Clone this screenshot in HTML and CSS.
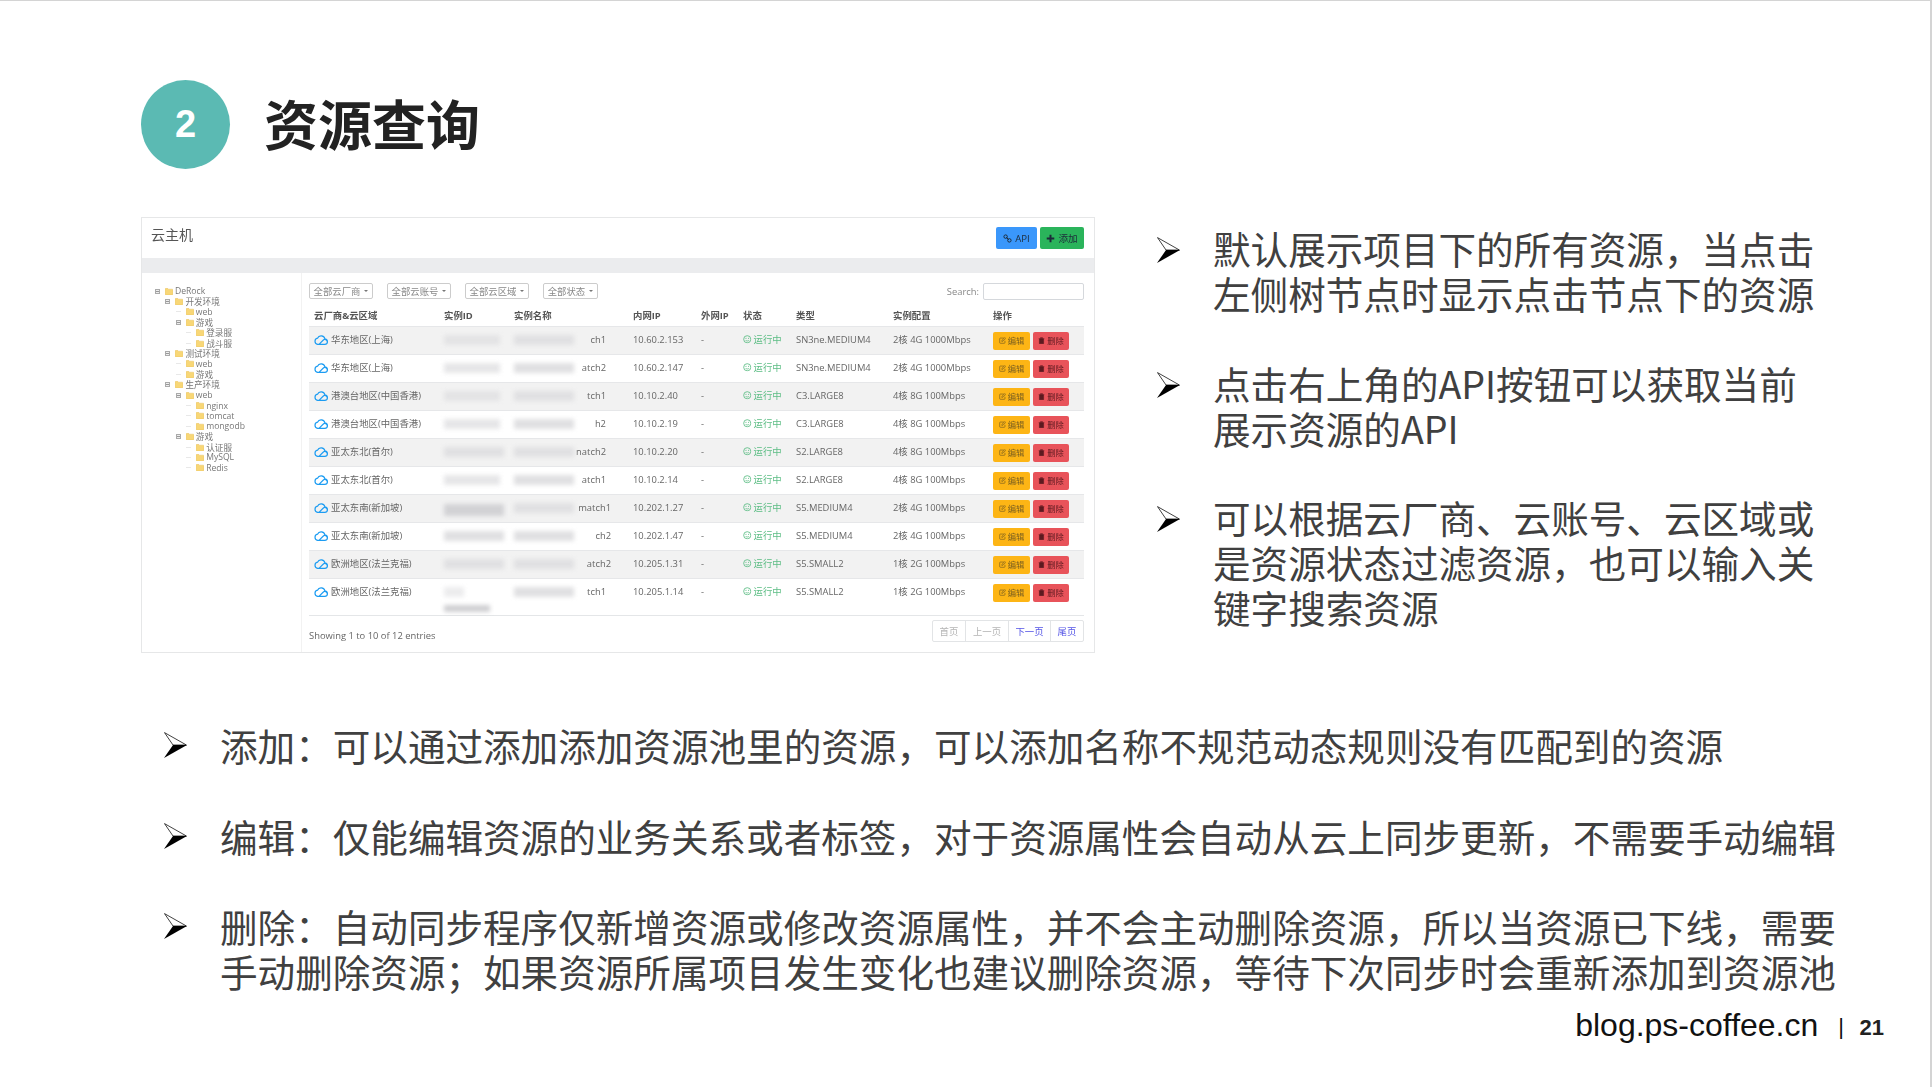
FILE: index.html
```html
<!DOCTYPE html>
<html lang="zh-CN">
<head>
<meta charset="utf-8">
<title>资源查询</title>
<link rel="stylesheet" href="styles.css">
</head>
<body>
<svg class="defs" aria-hidden="true">
  <symbol id="arrow" viewBox="0 0 23 26">
    <path d="M.5.6 22.4 13 9 13Z" fill="#fff" stroke="#111" stroke-width=".8"/>
    <path d="M0 26 9 13H23Z" fill="#000"/>
  </symbol>
  <symbol id="cloud" viewBox="0 0 14 11">
    <path d="M3.6 10.3H10.6A2.7 2.7 0 0 0 10.9 4.9 3.9 3.9 0 0 0 3.5 4.2 3.1 3.1 0 0 0 3.6 10.3ZM5.2 10.2 9.6 5.8A2.2 2.2 0 0 1 13 7.6" fill="none" stroke="#1c9cf2" stroke-width="1.2"/>
  </symbol>
  <symbol id="folder" viewBox="0 0 9 8">
    <path d="M0 1.2C0 .6.3.4.8.4H3L3.8 1.3H8.2C8.7 1.3 9 1.6 9 2V7.2C9 7.7 8.7 8 8.2 8H.8C.3 8 0 7.7 0 7.2Z" fill="#f8d777" stroke="#e3b84e" stroke-width=".4"/>
  </symbol>
  <symbol id="smile" viewBox="0 0 10 10">
    <circle cx="5" cy="5" r="4.2" fill="none" stroke="currentColor" stroke-width="1"/>
    <path d="M3 6C3.6 7.4 6.4 7.4 7 6" fill="none" stroke="currentColor" stroke-width=".9"/>
    <circle cx="3.5" cy="3.8" r=".7" fill="currentColor"/><circle cx="6.5" cy="3.8" r=".7" fill="currentColor"/>
  </symbol>
  <symbol id="edit" viewBox="0 0 10 10">
    <path d="M7 1.500H2C1.300 1.500 1 1.900 1 2.500V8C1 8.600 1.300 9 2 9H7.500C8.100 9 8.500 8.600 8.500 8V5.500M4 6.300 4.400 4.600 8.200.8 9.500 2.100 5.700 5.900Z" fill="none" stroke="currentColor" stroke-width="1"/>
  </symbol>
  <symbol id="trash" viewBox="0 0 10 10">
    <path d="M1 2.200H9M3.500 2V1H6.500V2M2 3H8V9.500H2Z" fill="currentColor" stroke="currentColor" stroke-width=".8"/>
  </symbol>
  <symbol id="link" viewBox="0 0 12 12">
    <circle cx="3.500" cy="3.500" r="2.300" fill="none" stroke="currentColor" stroke-width="1.300"/>
    <circle cx="8.500" cy="8.500" r="2.300" fill="none" stroke="currentColor" stroke-width="1.300"/>
    <path d="M4.500 4.500 7.500 7.500" stroke="currentColor" stroke-width="1.300"/>
  </symbol>
  <symbol id="plus" viewBox="0 0 10 10">
    <path d="M5 .8V9.200M.8 5H9.200" stroke="currentColor" stroke-width="2.200"/>
  </symbol>
</svg>

<main class="slide">
  <header class="heading">
    <div class="badge">2</div>
    <h1 class="title">资源查询</h1>
  </header>

  <section class="content">
    <div class="panel">
      <div class="panel-head">
        <span class="panel-title">云主机</span>
        <div class="head-actions">
          <span class="btn btn-api"><svg class="ico"><use href="#link"/></svg>API</span>
          <span class="btn btn-add"><svg class="ico"><use href="#plus"/></svg>添加</span>
        </div>
      </div>
      <div class="panel-band"></div>
      <div class="panel-body">
        <ul class="tree">
          <li class="node l0"><i class="sw minus"></i><svg class="fd"><use href="#folder"/></svg>DeRock</li>
          <li class="node l1"><i class="sw minus"></i><svg class="fd"><use href="#folder"/></svg>开发环境</li>
          <li class="node l2"><i class="sw"></i><svg class="fd"><use href="#folder"/></svg>web</li>
          <li class="node l2"><i class="sw minus"></i><svg class="fd"><use href="#folder"/></svg>游戏</li>
          <li class="node l3"><i class="sw"></i><svg class="fd"><use href="#folder"/></svg>登录服</li>
          <li class="node l3"><i class="sw"></i><svg class="fd"><use href="#folder"/></svg>战斗服</li>
          <li class="node l1"><i class="sw minus"></i><svg class="fd"><use href="#folder"/></svg>测试环境</li>
          <li class="node l2"><i class="sw"></i><svg class="fd"><use href="#folder"/></svg>web</li>
          <li class="node l2"><i class="sw"></i><svg class="fd"><use href="#folder"/></svg>游戏</li>
          <li class="node l1"><i class="sw minus"></i><svg class="fd"><use href="#folder"/></svg>生产环境</li>
          <li class="node l2"><i class="sw minus"></i><svg class="fd"><use href="#folder"/></svg>web</li>
          <li class="node l3"><i class="sw"></i><svg class="fd"><use href="#folder"/></svg>nginx</li>
          <li class="node l3"><i class="sw"></i><svg class="fd"><use href="#folder"/></svg>tomcat</li>
          <li class="node l3"><i class="sw"></i><svg class="fd"><use href="#folder"/></svg>mongodb</li>
          <li class="node l2"><i class="sw minus"></i><svg class="fd"><use href="#folder"/></svg>游戏</li>
          <li class="node l3"><i class="sw"></i><svg class="fd"><use href="#folder"/></svg>认证服</li>
          <li class="node l3"><i class="sw"></i><svg class="fd"><use href="#folder"/></svg>MySQL</li>
          <li class="node l3"><i class="sw"></i><svg class="fd"><use href="#folder"/></svg>Redis</li>
        </ul>
        <div class="data">
          <div class="filters">
            <div class="selects">
              <span class="select">全部云厂商<i class="caret"></i></span>
              <span class="select">全部云账号<i class="caret"></i></span>
              <span class="select">全部云区域<i class="caret"></i></span>
              <span class="select sel-short">全部状态<i class="caret"></i></span>
            </div>
            <label class="search">Search:<span class="search-box"></span></label>
          </div>
          <table class="grid">
            <colgroup><col class="c1"><col class="c2"><col class="c3"><col class="c4"><col class="c5"><col class="c6"><col class="c7"><col class="c8"><col class="c9"></colgroup>
            <thead><tr><th>云厂商&amp;云区域</th><th>实例ID</th><th>实例名称</th><th>内网IP</th><th>外网IP</th><th>状态</th><th>类型</th><th>实例配置</th><th>操作</th></tr></thead>
            <tbody>
              <tr><td><svg class="cl"><use href="#cloud"/></svg>华东地区(上海)</td><td><span class="blob b-part"></span></td><td><div class="nm e1"><span class="blob"></span>ch1</div></td><td>10.60.2.153</td><td>-</td><td class="ok"><svg class="sm"><use href="#smile"/></svg>运行中</td><td>SN3ne.MEDIUM4</td><td>2核 4G 1000Mbps</td><td><div class="acts"><span class="mini edit"><svg class="mi"><use href="#edit"/></svg>编辑</span><span class="mini del"><svg class="mi"><use href="#trash"/></svg>删除</span></div></td></tr>
              <tr><td><svg class="cl"><use href="#cloud"/></svg>华东地区(上海)</td><td><span class="blob b-part"></span></td><td><div class="nm e2"><span class="blob"></span>atch2</div></td><td>10.60.2.147</td><td>-</td><td class="ok"><svg class="sm"><use href="#smile"/></svg>运行中</td><td>SN3ne.MEDIUM4</td><td>2核 4G 1000Mbps</td><td><div class="acts"><span class="mini edit"><svg class="mi"><use href="#edit"/></svg>编辑</span><span class="mini del"><svg class="mi"><use href="#trash"/></svg>删除</span></div></td></tr>
              <tr><td><svg class="cl"><use href="#cloud"/></svg>港澳台地区(中国香港)</td><td><span class="blob b-part"></span></td><td><div class="nm e1"><span class="blob"></span>tch1</div></td><td>10.10.2.40</td><td>-</td><td class="ok"><svg class="sm"><use href="#smile"/></svg>运行中</td><td>C3.LARGE8</td><td>4核 8G 100Mbps</td><td><div class="acts"><span class="mini edit"><svg class="mi"><use href="#edit"/></svg>编辑</span><span class="mini del"><svg class="mi"><use href="#trash"/></svg>删除</span></div></td></tr>
              <tr><td><svg class="cl"><use href="#cloud"/></svg>港澳台地区(中国香港)</td><td><span class="blob b-part"></span></td><td><div class="nm e1"><span class="blob"></span>h2</div></td><td>10.10.2.19</td><td>-</td><td class="ok"><svg class="sm"><use href="#smile"/></svg>运行中</td><td>C3.LARGE8</td><td>4核 8G 100Mbps</td><td><div class="acts"><span class="mini edit"><svg class="mi"><use href="#edit"/></svg>编辑</span><span class="mini del"><svg class="mi"><use href="#trash"/></svg>删除</span></div></td></tr>
              <tr><td><svg class="cl"><use href="#cloud"/></svg>亚太东北(首尔)</td><td><span class="blob"></span></td><td><div class="nm e2"><span class="blob"></span>natch2</div></td><td>10.10.2.20</td><td>-</td><td class="ok"><svg class="sm"><use href="#smile"/></svg>运行中</td><td>S2.LARGE8</td><td>4核 8G 100Mbps</td><td><div class="acts"><span class="mini edit"><svg class="mi"><use href="#edit"/></svg>编辑</span><span class="mini del"><svg class="mi"><use href="#trash"/></svg>删除</span></div></td></tr>
              <tr><td><svg class="cl"><use href="#cloud"/></svg>亚太东北(首尔)</td><td><span class="blob b-part"></span></td><td><div class="nm e2"><span class="blob"></span>atch1</div></td><td>10.10.2.14</td><td>-</td><td class="ok"><svg class="sm"><use href="#smile"/></svg>运行中</td><td>S2.LARGE8</td><td>4核 8G 100Mbps</td><td><div class="acts"><span class="mini edit"><svg class="mi"><use href="#edit"/></svg>编辑</span><span class="mini del"><svg class="mi"><use href="#trash"/></svg>删除</span></div></td></tr>
              <tr><td><svg class="cl"><use href="#cloud"/></svg>亚太东南(新加坡)</td><td><span class="blob b-dark"></span></td><td><div class="nm e3"><span class="blob"></span>match1</div></td><td>10.202.1.27</td><td>-</td><td class="ok"><svg class="sm"><use href="#smile"/></svg>运行中</td><td>S5.MEDIUM4</td><td>2核 4G 100Mbps</td><td><div class="acts"><span class="mini edit"><svg class="mi"><use href="#edit"/></svg>编辑</span><span class="mini del"><svg class="mi"><use href="#trash"/></svg>删除</span></div></td></tr>
              <tr><td><svg class="cl"><use href="#cloud"/></svg>亚太东南(新加坡)</td><td><span class="blob"></span></td><td><div class="nm e3"><span class="blob"></span>ch2</div></td><td>10.202.1.47</td><td>-</td><td class="ok"><svg class="sm"><use href="#smile"/></svg>运行中</td><td>S5.MEDIUM4</td><td>2核 4G 100Mbps</td><td><div class="acts"><span class="mini edit"><svg class="mi"><use href="#edit"/></svg>编辑</span><span class="mini del"><svg class="mi"><use href="#trash"/></svg>删除</span></div></td></tr>
              <tr><td><svg class="cl"><use href="#cloud"/></svg>欧洲地区(法兰克福)</td><td><span class="blob"></span></td><td><div class="nm e3"><span class="blob"></span>atch2</div></td><td>10.205.1.31</td><td>-</td><td class="ok"><svg class="sm"><use href="#smile"/></svg>运行中</td><td>S5.SMALL2</td><td>1核 2G 100Mbps</td><td><div class="acts"><span class="mini edit"><svg class="mi"><use href="#edit"/></svg>编辑</span><span class="mini del"><svg class="mi"><use href="#trash"/></svg>删除</span></div></td></tr>
              <tr class="tall"><td><svg class="cl"><use href="#cloud"/></svg>欧洲地区(法兰克福)</td><td><span class="blob b-narrow"></span><span class="blob b-second"></span></td><td><div class="nm e2"><span class="blob"></span>tch1</div></td><td>10.205.1.14</td><td>-</td><td class="ok"><svg class="sm"><use href="#smile"/></svg>运行中</td><td>S5.SMALL2</td><td>1核 2G 100Mbps</td><td><div class="acts"><span class="mini edit"><svg class="mi"><use href="#edit"/></svg>编辑</span><span class="mini del"><svg class="mi"><use href="#trash"/></svg>删除</span></div></td></tr>
            </tbody>
          </table>
          <div class="foot">
            <span class="entries">Showing 1 to 10 of 12 entries</span>
            <div class="pager">
              <span class="pg off p1">首页</span>
              <span class="pg off p2">上一页</span>
              <span class="pg p3">下一页</span>
              <span class="pg p4">尾页</span>
            </div>
          </div>
        </div>
      </div>
    </div>

    <ul class="points side">
      <li class="point"><svg class="arrow"><use href="#arrow"/></svg><p>默认展示项目下的所有资源，当点击<br>左侧树节点时显示点击节点下的资源</p></li>
      <li class="point"><svg class="arrow"><use href="#arrow"/></svg><p>点击右上角的API按钮可以获取当前<br>展示资源的API</p></li>
      <li class="point"><svg class="arrow"><use href="#arrow"/></svg><p>可以根据云厂商、云账号、云区域或<br>是资源状态过滤资源，也可以输入关<br>键字搜索资源</p></li>
    </ul>
  </section>

  <ul class="points wide">
    <li class="point"><svg class="arrow"><use href="#arrow"/></svg><p>添加：可以通过添加添加资源池里的资源，可以添加名称不规范动态规则没有匹配到的资源</p></li>
    <li class="point"><svg class="arrow"><use href="#arrow"/></svg><p>编辑：仅能编辑资源的业务关系或者标签，对于资源属性会自动从云上同步更新，不需要手动编辑</p></li>
    <li class="point"><svg class="arrow"><use href="#arrow"/></svg><p>删除：自动同步程序仅新增资源或修改资源属性，并不会主动删除资源，所以当资源已下线，需要<br>手动删除资源；如果资源所属项目发生变化也建议删除资源，等待下次同步时会重新添加到资源池</p></li>
  </ul>

  <footer class="slide-foot">
    <span class="site">blog.ps-coffee.cn</span>
    <span class="sep">|</span>
    <span class="page-no">21</span>
  </footer>
</main>
</body>
</html>
```
FILE: styles.css
```css
* { box-sizing: border-box; }
html, body { margin: 0; padding: 0; background: #fff; }
ul { list-style: none; margin: 0; padding: 0; }
p, h1 { margin: 0; }
.defs { display: none; }

.slide {
  width: 1932px;
  height: 1087px;
  overflow: hidden;
  background: #fff;
  border-top: 1px solid #d4d4d4;
  border-right: 2px solid #d4d4d4;
  font-family: "Noto Sans CJK SC", "Noto Sans", sans-serif;
  color: #404040;
}

.heading {
  display: flex;
  align-items: center;
  gap: 34px;
  margin: 79px 0 0 141px;
  height: 89px;
}
.badge {
  width: 89px;
  height: 89px;
  border-radius: 50%;
  background: #5bbab3;
  color: #fff;
  font: bold 38px/89px "Liberation Sans", sans-serif;
  text-align: center;
}
.title {
  font-size: 54px;
  line-height: 64px;
  font-weight: 700;
  color: #222;
  margin-top: -4px;
}

.content {
  display: flex;
  align-items: flex-start;
  gap: 62px;
  margin: 48px 0 0 141px;
}

/* Embedded console screenshot */
.panel {
  width: 954px;
  height: 436px;
  border: 1px solid #e6e7e8;
  background: #fff;
  flex: none;
  filter: blur(.35px);
  font-family: "Open Sans", "Noto Sans CJK SC", sans-serif;
  font-size: 9.4px;
  color: #666;
}
.panel-head {
  height: 40px;
  display: flex;
  align-items: center;
  justify-content: space-between;
  padding: 0 10px 0 9px;
}
.panel-title { font-size: 14px; color: #555; margin-top: -8px; }
.head-actions { display: flex; gap: 3px; }
.btn {
  display: flex;
  align-items: center;
  justify-content: center;
  gap: 3px;
  height: 22px;
  border-radius: 2px;
  color: #1d2b3a;
  font-size: 9.6px;
}
.btn-api { width: 41px; background: #3a97fb; }
.btn-add { width: 44px; background: #2ab45b; }
.ico { width: 9px; height: 9px; }

.panel-band { height: 15px; background: #ebecee; }
.panel-body { display: flex; height: 379px; }

.tree {
  width: 160px;
  flex: none;
  padding: 13px 0 0 13px;
  border-right: 1px solid #f2f2f2;
  font-size: 8.6px;
  color: #777;
}
.node {
  display: flex;
  align-items: center;
  height: 10.4px;
  white-space: nowrap;
}
.l1 { padding-left: 10.4px; }
.l2 { padding-left: 20.8px; }
.l3 { padding-left: 31.2px; }
.sw {
  display: block;
  width: 5px;
  height: 5px;
  margin-right: 5px;
  flex: none;
  border-bottom: 1px solid #e8e8e8;
  transform: translateY(-2px);
}
.sw.minus {
  border: 1px solid #aaa;
  background: linear-gradient(#999, #999) center / 3px 1px no-repeat #eee;
  transform: none;
}
.fd { width: 8px; height: 7px; margin-right: 2px; flex: none; }

.data {
  width: 775px;
  margin-left: 7px;
  flex: none;
}
.filters {
  display: flex;
  justify-content: space-between;
  padding-top: 10px;
  height: 31px;
}
.selects { display: flex; gap: 14px; }
.select {
  display: flex;
  align-items: center;
  justify-content: center;
  gap: 4px;
  width: 64px;
  height: 16px;
  border: 1px solid #ccc;
  border-radius: 2px;
  color: #888;
}
.sel-short { width: 55px; }
.caret {
  width: 0;
  height: 0;
  border: 2px solid transparent;
  border-top: 2.500px solid #777;
  border-bottom: 0;
}
.search { display: flex; align-items: center; gap: 4px; height: 17px; color: #888; }
.search-box {
  width: 101px;
  height: 17px;
  border: 1px solid #d5d8dc;
  border-radius: 2px;
}

.grid {
  width: 775px;
  table-layout: fixed;
  border-collapse: collapse;
  border-bottom: 1px solid #e4e6e8;
}
.c1 { width: 130px; } .c2 { width: 70px; } .c3 { width: 119px; }
.c4 { width: 68px; } .c5 { width: 42px; } .c6 { width: 53px; }
.c7 { width: 97px; } .c8 { width: 100px; } .c9 { width: 96px; }
.grid th {
  height: 22px;
  padding: 0 5px;
  text-align: left;
  font-weight: 700;
  color: #555;
  white-space: nowrap;
}
.grid td {
  height: 28px;
  padding: 6px 5px 0;
  line-height: 13px;
  vertical-align: top;
  white-space: nowrap;
  border-top: 1px solid #e6e7e9;
}
.grid tbody tr:nth-child(odd) { background: #f2f2f2; }
.grid .tall td { height: 37px; }
.cl { width: 14px; height: 11px; margin-right: 3px; vertical-align: -2px; }

.blob {
  display: block;
  width: 60px;
  height: 10px;
  margin-top: 2px;
  background: #e0e0e2;
  filter: blur(2px);
}
.b-part { width: 56px; opacity: .8; }
.b-dark { background: #d2d2d5; height: 12px; margin-top: 3px; }
.b-narrow { width: 20px; opacity: .6; }
.b-second { width: 46px; height: 7px; margin-top: 8px; background: #cfcfd2; }
.nm { display: flex; justify-content: space-between; }
.e1 { width: 92px; }
.e2 { width: 92px; }
.e3 { width: 97px; }
.ok { color: #5cbd84; }
.sm { width: 8.500px; height: 8.500px; margin-right: 2px; vertical-align: -1px; }
.acts { display: flex; gap: 3px; margin-top: -1px; }
.mini {
  display: flex;
  align-items: center;
  justify-content: center;
  gap: 2px;
  width: 37px;
  height: 18px;
  border-radius: 2px;
  font-size: 8.300px;
}
.edit { background: #fdb515; color: #7c6020; }
.del { width: 36px; background: #e8535a; color: #5c1a20; }
.mi { width: 7px; height: 7px; }

.foot {
  display: flex;
  justify-content: space-between;
  align-items: flex-start;
  padding-top: 4px;
}
.entries { margin-top: 9px; line-height: 13px; }
.pager {
  display: flex;
  height: 22px;
  border: 1px solid #e2e4e6;
  border-radius: 2px;
}
.pg {
  display: flex;
  align-items: center;
  justify-content: center;
  border-right: 1px solid #e2e4e6;
  color: #5555e6;
}
.pg:last-child { border-right: 0; }
.off { color: #b5b5b5; }
.p1 { width: 33px; } .p2 { width: 43px; } .p3 { width: 42px; } .p4 { width: 32px; }

/* Bulleted copy */
.points { display: flex; flex-direction: column; gap: 45px; }
.side { padding-top: 8px; gap: 44.500px; }
.wide { margin: 69px 0 0 164px; gap: 45.500px; }
.point { display: flex; white-space: nowrap; }
.point p { font-size: 37.600px; line-height: 45px; }
.arrow { width: 23px; height: 26px; margin: 10px 33px 0 0; flex: none; }
.side .arrow { margin-top: 12px; }

.slide-foot {
  display: flex;
  align-items: center;
  justify-content: flex-end;
  margin: 13px 46px 0 0;
  height: 38px;
  font-family: "Liberation Sans", Arial, sans-serif;
  color: #111;
}
.site { font-size: 32px; }
.sep { font-size: 22px; margin: 4px 15.500px 0 20px; }
.page-no { font-size: 22px; font-weight: 700; margin-top: 5px; color: #222; }
```
